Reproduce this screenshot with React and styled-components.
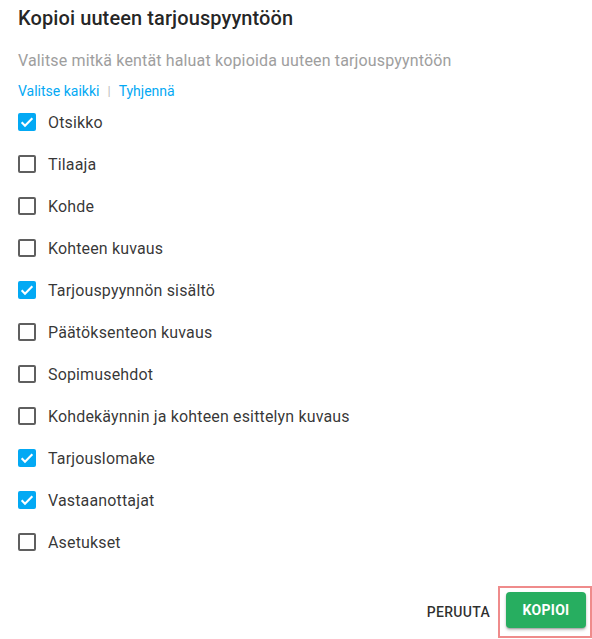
import { useState } from "react";
import styled, { createGlobalStyle } from "styled-components";

const GlobalStyle = createGlobalStyle`
  html, body {
    margin: 0;
    padding: 0;
    background: #fff;
  }
  body {
    font-family: Roboto, "Liberation Sans", Arial, sans-serif;
  }
`;

const Dialog = styled.div`
  width: 592px;
  height: 639px;
  box-sizing: border-box;
  padding: 6px 0 0 18px;
  background: #fff;
  display: flex;
  flex-direction: column;
`;

const Title = styled.h2`
  margin: 0;
  font-size: 20px;
  line-height: 24px;
  font-weight: 500;
  color: rgba(0, 0, 0, 0.87);
  letter-spacing: 0.1px;
`;

const Subtitle = styled.p`
  margin: 19px 0 0;
  font-size: 16px;
  line-height: 24px;
  letter-spacing: 0.15px;
  color: #9e9e9e;
`;

const LinkRow = styled.div`
  margin-top: 8px;
  display: flex;
  align-items: center;
  gap: 8px;
  font-size: 14px;
  line-height: 20px;
`;

const TextLink = styled.a`
  color: #03a9f4;
  cursor: pointer;
`;

const Separator = styled.span`
  color: #bdbdbd;
  font-size: 13px;
`;

const List = styled.div`
  display: flex;
  flex-direction: column;
`;

const Row = styled.label`
  height: 42px;
  display: flex;
  align-items: center;
  gap: 12px;
  cursor: pointer;
  font-size: 16px;
  letter-spacing: 0.15px;
  color: rgba(0, 0, 0, 0.8);
`;

const Box = styled.span`
  width: 18px;
  height: 18px;
  box-sizing: border-box;
  border-radius: 2px;
  display: flex;
  align-items: center;
  justify-content: center;
  background: ${(p) => (p.$checked ? "#03a9f4" : "transparent")};
  border: ${(p) => (p.$checked ? "none" : "2px solid #5f5f5f")};
`;

const Footer = styled.div`
  margin-top: 23px;
  display: flex;
  justify-content: flex-end;
  align-items: center;
`;

const TextButton = styled.button`
  background: none;
  border: none;
  padding: 0 8px;
  height: 36px;
  font-family: inherit;
  font-size: 14px;
  font-weight: 500;
  letter-spacing: 0.3px;
  color: rgba(0, 0, 0, 0.82);
  text-transform: uppercase;
  cursor: pointer;
`;

const Highlight = styled.div`
  border: 2px solid #ef8b8b;
  padding: 4px 4px 8px 6px;
  display: flex;
`;

const PrimaryButton = styled.button`
  width: 80px;
  height: 36px;
  border: none;
  border-radius: 4px;
  background: #27ae60;
  color: #fff;
  font-family: inherit;
  font-size: 14px;
  font-weight: 700;
  letter-spacing: 0.3px;
  text-transform: uppercase;
  box-shadow: 0 2px 3px rgba(0, 0, 0, 0.25), 0 1px 1px rgba(0, 0, 0, 0.14);
  cursor: pointer;
`;

const FIELDS = [
  { id: "otsikko", label: "Otsikko", checked: true },
  { id: "tilaaja", label: "Tilaaja", checked: false },
  { id: "kohde", label: "Kohde", checked: false },
  { id: "kuvaus", label: "Kohteen kuvaus", checked: false },
  { id: "sisalto", label: "Tarjouspyynnön sisältö", checked: true },
  { id: "paatos", label: "Päätöksenteon kuvaus", checked: false },
  { id: "ehdot", label: "Sopimusehdot", checked: false },
  { id: "kaynti", label: "Kohdekäynnin ja kohteen esittelyn kuvaus", checked: false },
  { id: "lomake", label: "Tarjouslomake", checked: true },
  { id: "vastaanottajat", label: "Vastaanottajat", checked: true },
  { id: "asetukset", label: "Asetukset", checked: false },
];

function Checkbox({ checked }) {
  return (
    <Box $checked={checked}>
      {checked && (
        <svg width="16" height="16" viewBox="0 0 24 24">
          <path
            d="M4 12.5l5 5L20 6.5"
            fill="none"
            stroke="#fff"
            strokeWidth="3.2"
          />
        </svg>
      )}
    </Box>
  );
}

export default function App() {
  const [selected, setSelected] = useState(
    Object.fromEntries(FIELDS.map((f) => [f.id, f.checked]))
  );

  const toggle = (id) => setSelected((s) => ({ ...s, [id]: !s[id] }));
  const setAll = (value) =>
    setSelected(Object.fromEntries(FIELDS.map((f) => [f.id, value])));

  return (
    <Dialog>
      <GlobalStyle />
      <Title>Kopioi uuteen tarjouspyyntöön</Title>
      <Subtitle>Valitse mitkä kentät haluat kopioida uuteen tarjouspyyntöön</Subtitle>
      <LinkRow>
        <TextLink onClick={() => setAll(true)}>Valitse kaikki</TextLink>
        <Separator>|</Separator>
        <TextLink onClick={() => setAll(false)}>Tyhjennä</TextLink>
      </LinkRow>
      <List>
        {FIELDS.map((f) => (
          <Row key={f.id} onClick={() => toggle(f.id)}>
            <Checkbox checked={selected[f.id]} />
            {f.label}
          </Row>
        ))}
      </List>
      <Footer>
        <TextButton>Peruuta</TextButton>
        <Highlight>
          <PrimaryButton>Kopioi</PrimaryButton>
        </Highlight>
      </Footer>
    </Dialog>
  );
}
